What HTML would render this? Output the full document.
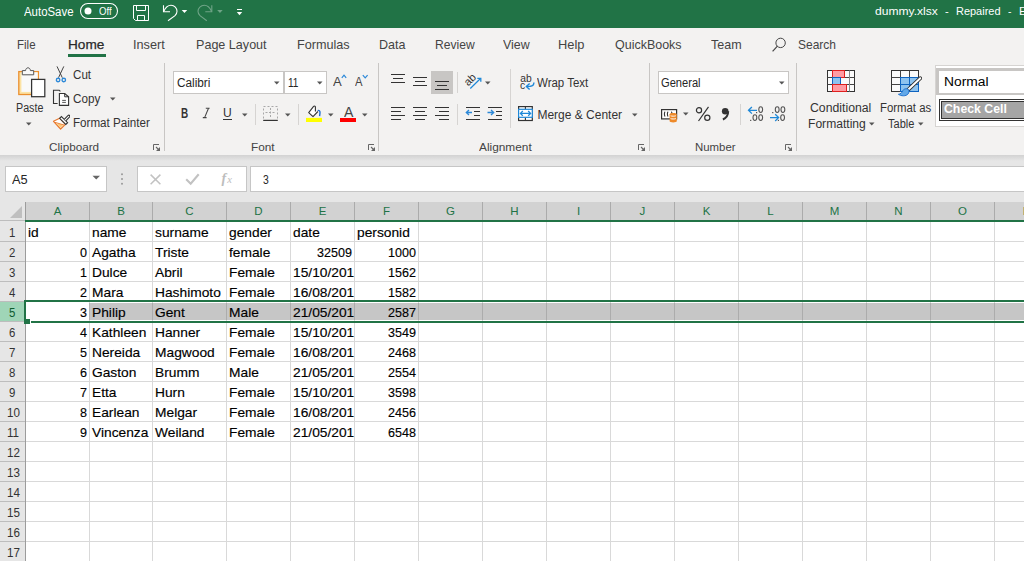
<!DOCTYPE html><html><head><meta charset="utf-8"><style>
html,body{margin:0;padding:0;width:1024px;height:561px;overflow:hidden;background:#fff}
body{position:relative;font-family:"Liberation Sans",sans-serif}
.r{position:absolute;display:block}
.t{position:absolute;white-space:nowrap;transform-origin:0 0}
</style></head><body>
<div class="r" style="left:0px;top:0px;width:1024px;height:28px;background:#217346;"></div>
<div class="t" style="left:23.50px;top:5.74px;font-size:12px;line-height:12px;color:#fff;transform:scaleX(0.9519);">AutoSave</div>
<svg class="r" style="left:79px;top:2px" width="41" height="19" viewBox="0 0 41 19"><rect x="1.5" y="1.5" width="37" height="15" rx="7.5" fill="none" stroke="#fff" stroke-width="1.05"/><circle cx="9" cy="9" r="3.5" fill="#fff"/></svg>
<div class="t" style="left:99.00px;top:6.11px;font-size:10.5px;line-height:10.5px;color:#fff;transform:scaleX(0.9137);">Off</div>
<svg class="r" style="left:132px;top:4px" width="18" height="18" viewBox="0 0 18 18"><path d="M1.5 1.5h15v15h-13l-2-2z" fill="none" stroke="#fff" stroke-width="1"/><path d="M4.5 1.5v5h9v-5" fill="none" stroke="#fff"/><path d="M5.5 16.5v-5h7v5" fill="none" stroke="#fff"/></svg>
<svg class="r" style="left:160px;top:4px" width="30" height="19" viewBox="0 0 30 19"><path d="M3.5 1.2v6.5h6.5" fill="none" stroke="#fff" stroke-width="1.1"/><path d="M3.8 7.3C5.5 3.5 8.5 1.3 11 1.3c3.5 0 6 2.6 6 6 0 1.8-.8 3.2-2 4.4L8 16.8" fill="none" stroke="#fff" stroke-width="1.1"/><path d="M21.7 6h5.5l-2.75 3z" fill="#fff"/></svg>
<svg class="r" style="left:196px;top:4px" width="30" height="19" viewBox="0 0 30 19"><g opacity="0.35"><path d="M15.8 1.2v6.5h-6.5" fill="none" stroke="#fff" stroke-width="1.1"/><path d="M15.5 7.3C13.8 3.5 10.8 1.3 8.3 1.3c-3.5 0-6.3 2.6-6.3 6 0 1.8.8 3.2 2 4.4L10.8 16.8" fill="none" stroke="#fff" stroke-width="1.1"/><path d="M21.2 6h5.5l-2.75 3z" fill="#fff"/></g></svg>
<svg class="r" style="left:235px;top:7px" width="9" height="10" viewBox="0 0 9 10"><rect x="2" y="2" width="5" height="1" fill="#fff"/><path d="M1.8 5h5.4l-2.7 3.2z" fill="#fff"/></svg>
<div class="t" style="left:875.40px;top:5.76px;font-size:11.5px;line-height:11.5px;color:#fff;transform:scaleX(1.0502);">dummy.xlsx</div>
<div class="t" style="left:944.50px;top:5.76px;font-size:11.5px;line-height:11.5px;color:#fff;transform:scaleX(0.9737);">-</div>
<div class="t" style="left:955.50px;top:5.76px;font-size:11.5px;line-height:11.5px;color:#fff;transform:scaleX(0.9529);">Repaired</div>
<div class="t" style="left:1008.00px;top:5.76px;font-size:11.5px;line-height:11.5px;color:#fff;transform:scaleX(0.8947);">-</div>
<div class="t" style="left:1019.00px;top:5.76px;font-size:11.5px;line-height:11.5px;color:#fff;">E</div>
<div class="r" style="left:0px;top:28px;width:1024px;height:127px;background:#f3f2f1;"></div>
<div class="t" style="left:17.00px;top:38.29px;font-size:13px;line-height:13px;color:#444;transform:scaleX(0.8852);">File</div>
<div class="t" style="left:68.40px;top:38.29px;font-size:13px;line-height:13px;color:#262626;transform:scaleX(1.0461);-webkit-text-stroke:0.25px #333;">Home</div>
<div class="t" style="left:133.20px;top:38.29px;font-size:13px;line-height:13px;color:#444;transform:scaleX(0.9754);">Insert</div>
<div class="t" style="left:196.00px;top:38.29px;font-size:13px;line-height:13px;color:#444;transform:scaleX(0.9671);">Page Layout</div>
<div class="t" style="left:297.00px;top:38.29px;font-size:13px;line-height:13px;color:#444;transform:scaleX(0.9723);">Formulas</div>
<div class="t" style="left:379.30px;top:38.29px;font-size:13px;line-height:13px;color:#444;transform:scaleX(0.9636);">Data</div>
<div class="t" style="left:435.30px;top:38.29px;font-size:13px;line-height:13px;color:#444;transform:scaleX(0.9297);">Review</div>
<div class="t" style="left:502.90px;top:38.29px;font-size:13px;line-height:13px;color:#444;transform:scaleX(0.9537);">View</div>
<div class="t" style="left:558.00px;top:38.29px;font-size:13px;line-height:13px;color:#444;transform:scaleX(0.9888);">Help</div>
<div class="t" style="left:615.00px;top:38.29px;font-size:13px;line-height:13px;color:#444;transform:scaleX(0.9597);">QuickBooks</div>
<div class="t" style="left:711.00px;top:38.29px;font-size:13px;line-height:13px;color:#444;transform:scaleX(0.9623);">Team</div>
<div class="t" style="left:798.00px;top:38.29px;font-size:13px;line-height:13px;color:#444;transform:scaleX(0.9223);">Search</div>
<div class="r" style="left:68px;top:54px;width:38px;height:3px;background:#217346;"></div>
<svg class="r" style="left:770px;top:35px" width="18" height="18" viewBox="0 0 18 18"><circle cx="10.6" cy="7.9" r="4.7" fill="none" stroke="#444" stroke-width="1"/><path d="M7.4 11.2L2.6 16.3" stroke="#444" stroke-width="1.2"/></svg>
<svg class="r" style="left:17px;top:65px" width="30" height="33" viewBox="0 0 30 33"><rect x="1.8" y="6.6" width="19.6" height="22.9" fill="#fce3a4" stroke="#ea8f2e" stroke-width="1.3"/><rect x="4.4" y="7.3" width="16.3" height="19.6" fill="#f9f9f9"/><path d="M5.3 9.8V5.6h3.3c0-1.6 1.1-2.8 2.4-2.8s2.4 1.2 2.4 2.8h3.3v4.2z" fill="#f9f9f9" stroke="#555" stroke-width="1"/><rect x="14.6" y="14.4" width="13.2" height="17.3" fill="#fff" stroke="#333" stroke-width="1.25"/></svg>
<div class="t" style="left:15.60px;top:102.14px;font-size:12px;line-height:12px;color:#333;transform:scaleX(0.8925);">Paste</div>
<svg class="r" style="left:26px;top:122px" width="6" height="4" viewBox="0 0 6 4"><path d="M0 0.5h5.5L2.75 3.5z" fill="#555"/></svg>
<svg class="r" style="left:54px;top:65px" width="14" height="18" viewBox="0 0 14 18"><path d="M3 1.4l5.3 11.3M9.8 1.4L4.5 12.7" stroke="#444" stroke-width="1" fill="none"/><circle cx="4.1" cy="15" r="1.75" fill="none" stroke="#2b88d8" stroke-width="1.3"/><circle cx="9.8" cy="15" r="1.75" fill="none" stroke="#2b88d8" stroke-width="1.3"/></svg>
<div class="t" style="left:72.70px;top:68.54px;font-size:12px;line-height:12px;color:#333;transform:scaleX(0.9679);">Cut</div>
<svg class="r" style="left:52px;top:89px" width="18" height="18" viewBox="0 0 18 18"><path d="M5.6 14.5H1.5V1.3h5.7l1.2 1" fill="none" stroke="#333" stroke-width="1.1"/><path d="M7.4 4.5h5.3l3.9 3.3v8.6H7.4z" fill="#fff" stroke="#333" stroke-width="1.1"/><path d="M12.7 4.5v3.3h3.9" fill="none" stroke="#333" stroke-width="1"/><path d="M10.2 11.4h3.7M10.2 13.4h3.7" stroke="#444" stroke-width="0.9"/></svg>
<div class="t" style="left:72.70px;top:92.84px;font-size:12px;line-height:12px;color:#333;transform:scaleX(0.9750);">Copy</div>
<svg class="r" style="left:110px;top:97px" width="6" height="4" viewBox="0 0 6 4"><path d="M0 0.5h5.5L2.75 3.5z" fill="#555"/></svg>
<svg class="r" style="left:52px;top:113px" width="18" height="17" viewBox="0 0 18 17"><path d="M1.5 8.3L7.6 5.2l5.8 6.2-4.8 4.6z" fill="#fff" stroke="#e8782d" stroke-width="1.2" stroke-linejoin="round"/><path d="M3.8 10.3l7.7 1.5-3 3z" fill="#fbc97a"/><path d="M2.5 9.2l9.5 2.8" stroke="#e8782d" stroke-width="0.9"/><path d="M7.6 5.3l1.8-1.8 6.2 6.2-1.8 1.8z" fill="#fff" stroke="#333" stroke-width="1.1"/><path d="M12.3 6.3l3.6-3.6c.6-.6 1.3-.6 1.7-.2.4.4.4 1.1-.2 1.7l-3.6 3.6" fill="#fff" stroke="#333" stroke-width="1.1"/></svg>
<div class="t" style="left:72.70px;top:116.64px;font-size:12px;line-height:12px;color:#333;transform:scaleX(0.9685);">Format Painter</div>
<div class="t" style="left:48.60px;top:141.76px;font-size:11.5px;line-height:11.5px;color:#444;transform:scaleX(1.0183);">Clipboard</div>
<svg class="r" style="left:152px;top:143px" width="10" height="10" viewBox="0 0 10 10"><path d="M1.5 7V1.5h5.5" fill="none" stroke="#666" stroke-width="1"/><path d="M8 4v4H4z" fill="#666"/><path d="M4 4l3.5 3.5" stroke="#666" stroke-width="1.1"/></svg>
<div class="r" style="left:164px;top:63px;width:1px;height:88px;background:#c8c6c4;"></div>
<div class="r" style="left:173px;top:71px;width:111px;height:23px;background:#fff;border:1px solid #c8c6c4;box-sizing:border-box;"></div>
<div class="r" style="left:284px;top:71px;width:43px;height:23px;background:#fff;border:1px solid #c8c6c4;box-sizing:border-box;"></div>
<div class="t" style="left:176.60px;top:76.64px;font-size:12px;line-height:12px;color:#262626;transform:scaleX(0.9824);">Calibri</div>
<svg class="r" style="left:274px;top:81px" width="6" height="4" viewBox="0 0 6 4"><path d="M0 0.5h5.5L2.75 3.5z" fill="#555"/></svg>
<div class="t" style="left:287.50px;top:76.64px;font-size:12px;line-height:12px;color:#262626;transform:scaleX(0.8400);">11</div>
<svg class="r" style="left:317px;top:81px" width="6" height="4" viewBox="0 0 6 4"><path d="M0 0.5h5.5L2.75 3.5z" fill="#555"/></svg>
<div class="t" style="left:333.00px;top:74.77px;font-size:13.5px;line-height:13.5px;color:#444;transform:scaleX(0.9667);">A</div>
<svg class="r" style="left:341px;top:74px" width="6" height="5" viewBox="0 0 6 5"><path d="M0.8 3.8L3 1.2l2.2 2.6" fill="none" stroke="#2b88d8" stroke-width="1.2"/></svg>
<div class="t" style="left:354.80px;top:76.04px;font-size:12px;line-height:12px;color:#444;transform:scaleX(0.9375);">A</div>
<svg class="r" style="left:362px;top:74px" width="7" height="5" viewBox="0 0 7 5"><path d="M0.8 1.2L3.2 3.8l2.4-2.6" fill="none" stroke="#2b88d8" stroke-width="1.2"/></svg>
<div class="t" style="left:180.80px;top:105.72px;font-size:14.5px;line-height:14.5px;color:#333;font-weight:bold;transform:scaleX(0.6857);">B</div>
<svg class="r" style="left:202px;top:107px" width="9" height="12" viewBox="0 0 9 12"><path d="M6.5 1.3L2.6 10.6" stroke="#444" stroke-width="1.05"/><path d="M3.8 1.3h3.8M0.8 10.6h3.8" stroke="#444" stroke-width="1.1"/></svg>
<div class="t" style="left:223.00px;top:107.02px;font-size:12.5px;line-height:12.5px;color:#333;transform:scaleX(0.9667);">U</div>
<div class="r" style="left:223px;top:119px;width:9px;height:1px;background:#333;"></div>
<svg class="r" style="left:242px;top:113px" width="6" height="4" viewBox="0 0 6 4"><path d="M0 0.5h5.5L2.75 3.5z" fill="#555"/></svg>
<div class="r" style="left:255px;top:104px;width:1px;height:21px;background:#d6d4d2;"></div>
<svg class="r" style="left:262px;top:105px" width="17" height="17" viewBox="0 0 17 17"><path d="M1.5 13.5V1.5h14v12" fill="none" stroke="#a8a8a8" stroke-width="1" stroke-dasharray="2 2"/><path d="M8.5 3v9M3.5 7.5h10" stroke="#a8a8a8" stroke-width="1" stroke-dasharray="2 1.5"/><path d="M1.2 15.4h14.6" stroke="#333" stroke-width="1.2"/></svg>
<svg class="r" style="left:285px;top:113px" width="6" height="4" viewBox="0 0 6 4"><path d="M0 0.5h5.5L2.75 3.5z" fill="#555"/></svg>
<div class="r" style="left:298px;top:104px;width:1px;height:21px;background:#d6d4d2;"></div>
<svg class="r" style="left:306px;top:105px" width="18" height="17" viewBox="0 0 18 17"><path d="M9.4 6.4V2.1c0-.7-.4-1.1-.9-1.1s-.8.2-1.1.7L2.7 7.6 7 11.7l4.9-5.2" fill="#fff" stroke="#333" stroke-width="1.1" stroke-linejoin="round"/><path d="M11.7 5.6c1.3-.6 2.4.4 2.3 2l-.4 3.5" fill="none" stroke="#1e6fd0" stroke-width="1.4"/><rect x="0" y="12.9" width="16" height="4.1" fill="#ffff00"/></svg>
<svg class="r" style="left:328px;top:113px" width="6" height="4" viewBox="0 0 6 4"><path d="M0 0.5h5.5L2.75 3.5z" fill="#555"/></svg>
<div class="t" style="left:343.50px;top:104.30px;font-size:15px;line-height:15px;color:#444;transform:scaleX(0.9400);">A</div>
<div class="r" style="left:340px;top:118px;width:16px;height:4px;background:#f00;"></div>
<svg class="r" style="left:362px;top:113px" width="6" height="4" viewBox="0 0 6 4"><path d="M0 0.5h5.5L2.75 3.5z" fill="#555"/></svg>
<div class="t" style="left:251.00px;top:141.76px;font-size:11.5px;line-height:11.5px;color:#444;transform:scaleX(1.0261);">Font</div>
<svg class="r" style="left:367px;top:143px" width="10" height="10" viewBox="0 0 10 10"><path d="M1.5 7V1.5h5.5" fill="none" stroke="#666" stroke-width="1"/><path d="M8 4v4H4z" fill="#666"/><path d="M4 4l3.5 3.5" stroke="#666" stroke-width="1.1"/></svg>
<div class="r" style="left:378px;top:63px;width:1px;height:88px;background:#c8c6c4;"></div>
<div class="r" style="left:391px;top:74px;width:14px;height:1.3px;background:#333;"></div>
<div class="r" style="left:393px;top:78px;width:10px;height:1.3px;background:#333;"></div>
<div class="r" style="left:391px;top:82px;width:14px;height:1.3px;background:#333;"></div>
<div class="r" style="left:413px;top:77px;width:14px;height:1.3px;background:#333;"></div>
<div class="r" style="left:415px;top:81px;width:10px;height:1.3px;background:#333;"></div>
<div class="r" style="left:413px;top:85px;width:14px;height:1.3px;background:#333;"></div>
<div class="r" style="left:431px;top:71px;width:22px;height:23px;background:#c8c6c4;"></div>
<div class="r" style="left:435px;top:81px;width:14px;height:1.3px;background:#333;"></div>
<div class="r" style="left:437px;top:85px;width:10px;height:1.3px;background:#333;"></div>
<div class="r" style="left:435px;top:89px;width:14px;height:1.3px;background:#333;"></div>
<div class="r" style="left:457px;top:72px;width:1px;height:21px;background:#d6d4d2;"></div>
<svg class="r" style="left:464px;top:72px" width="20" height="19" viewBox="0 0 20 19"><text x="0" y="0" font-family="Liberation Sans" font-size="11" fill="#333" transform="translate(4.2,14.6) rotate(-45)">ab</text><path d="M6.3 16.5L16.5 6.5" stroke="#1e88d8" stroke-width="1.2"/><path d="M13.3 6.3h3.5v3.4" fill="none" stroke="#1e88d8" stroke-width="1.3"/></svg>
<svg class="r" style="left:485px;top:81px" width="6" height="4" viewBox="0 0 6 4"><path d="M0 0.5h5.5L2.75 3.5z" fill="#555"/></svg>
<div class="r" style="left:391px;top:107px;width:14px;height:1.3px;background:#333;"></div>
<div class="r" style="left:391px;top:111px;width:10px;height:1.3px;background:#333;"></div>
<div class="r" style="left:391px;top:115px;width:14px;height:1.3px;background:#333;"></div>
<div class="r" style="left:391px;top:119px;width:10px;height:1.3px;background:#333;"></div>
<div class="r" style="left:413px;top:107px;width:14px;height:1.3px;background:#333;"></div>
<div class="r" style="left:415.2px;top:111px;width:9.5px;height:1.3px;background:#333;"></div>
<div class="r" style="left:413px;top:115px;width:14px;height:1.3px;background:#333;"></div>
<div class="r" style="left:415.2px;top:119px;width:9.5px;height:1.3px;background:#333;"></div>
<div class="r" style="left:435px;top:107px;width:14px;height:1.3px;background:#333;"></div>
<div class="r" style="left:439px;top:111px;width:10px;height:1.3px;background:#333;"></div>
<div class="r" style="left:435px;top:115px;width:14px;height:1.3px;background:#333;"></div>
<div class="r" style="left:439px;top:119px;width:10px;height:1.3px;background:#333;"></div>
<div class="r" style="left:457px;top:104px;width:1px;height:21px;background:#d6d4d2;"></div>
<div class="r" style="left:466px;top:107px;width:14px;height:1.3px;background:#333;"></div>
<div class="r" style="left:474px;top:111px;width:6px;height:1.3px;background:#333;"></div>
<div class="r" style="left:474px;top:115px;width:6px;height:1.3px;background:#333;"></div>
<div class="r" style="left:466px;top:119px;width:14px;height:1.3px;background:#333;"></div>
<svg class="r" style="left:465px;top:109px" width="8" height="7" viewBox="0 0 8 7"><path d="M7 3.5H1.5M4 1L1.3 3.5 4 6" fill="none" stroke="#2b88d8" stroke-width="1.3"/></svg>
<div class="r" style="left:488px;top:107px;width:14px;height:1.3px;background:#333;"></div>
<div class="r" style="left:496px;top:111px;width:6px;height:1.3px;background:#333;"></div>
<div class="r" style="left:496px;top:115px;width:6px;height:1.3px;background:#333;"></div>
<div class="r" style="left:488px;top:119px;width:14px;height:1.3px;background:#333;"></div>
<svg class="r" style="left:487px;top:109px" width="8" height="7" viewBox="0 0 8 7"><path d="M0.5 3.5H6.5M4 1l2.7 2.5L4 6" fill="none" stroke="#2b88d8" stroke-width="1.3"/></svg>
<div class="r" style="left:510px;top:69px;width:1px;height:59px;background:#d6d4d2;"></div>
<svg class="r" style="left:519px;top:74px" width="17" height="17" viewBox="0 0 17 17"><text x="1.2" y="7.6" font-family="Liberation Sans" font-size="10.3" fill="#333">ab</text><text x="1" y="14.8" font-family="Liberation Sans" font-size="10.3" fill="#333">c</text><path d="M14.9 8.4c0 2-1.5 3.6-3.6 3.9L7.6 12.4" fill="none" stroke="#1e88d8" stroke-width="1.4"/><path d="M10.6 9.4L7.4 12.4l3.2 3.1" fill="none" stroke="#1e88d8" stroke-width="1.4"/></svg>
<div class="t" style="left:537.40px;top:76.84px;font-size:12px;line-height:12px;color:#333;transform:scaleX(0.9571);">Wrap Text</div>
<svg class="r" style="left:517px;top:105px" width="17" height="17" viewBox="0 0 17 17"><rect x="1.6" y="1.6" width="13.7" height="13.9" fill="#fff" stroke="#333" stroke-width="1.2"/><path d="M8.4 1.6v2.7M8.4 12.3v3.2" stroke="#333" stroke-width="1.1"/><rect x="1.6" y="4.3" width="13.7" height="8" fill="#fff" stroke="#1e88d8" stroke-width="1.2"/><path d="M3.6 8.4h9.8M5.8 6L3.4 8.4l2.4 2.4M11.2 6l2.4 2.4-2.4 2.4" fill="none" stroke="#1e88d8" stroke-width="1.3"/></svg>
<div class="t" style="left:537.40px;top:108.64px;font-size:12px;line-height:12px;color:#333;">Merge &amp; Center</div>
<svg class="r" style="left:632px;top:113px" width="6" height="4" viewBox="0 0 6 4"><path d="M0 0.5h5.5L2.75 3.5z" fill="#555"/></svg>
<div class="t" style="left:478.90px;top:141.76px;font-size:11.5px;line-height:11.5px;color:#444;transform:scaleX(1.0313);">Alignment</div>
<svg class="r" style="left:637px;top:143px" width="10" height="10" viewBox="0 0 10 10"><path d="M1.5 7V1.5h5.5" fill="none" stroke="#666" stroke-width="1"/><path d="M8 4v4H4z" fill="#666"/><path d="M4 4l3.5 3.5" stroke="#666" stroke-width="1.1"/></svg>
<div class="r" style="left:649px;top:63px;width:1px;height:88px;background:#c8c6c4;"></div>
<div class="r" style="left:658px;top:71px;width:131px;height:23px;background:#fff;border:1px solid #c8c6c4;box-sizing:border-box;"></div>
<div class="t" style="left:661.40px;top:76.84px;font-size:12px;line-height:12px;color:#262626;transform:scaleX(0.9274);">General</div>
<svg class="r" style="left:779px;top:81px" width="6" height="4" viewBox="0 0 6 4"><path d="M0 0.5h5.5L2.75 3.5z" fill="#555"/></svg>
<svg class="r" style="left:660px;top:108px" width="20" height="15" viewBox="0 0 20 15"><rect x="1.6" y="1.6" width="15" height="9.3" fill="#fff" stroke="#333" stroke-width="1.2"/><path d="M5.2 3.8c-1.1.5-1.1 4 0 4.6M8.2 3.8c-1.1.5-1.1 4 0 4.6M11.2 3.8c1.1.5 1.1 4 0 4.6" fill="none" stroke="#333" stroke-width="1.1"/><path d="M9.6 6.3c0-1 1.6-1.4 3.6-1.4s3.6.4 3.6 1.4v6.8c0 1-1.6 1.4-3.6 1.4s-3.6-.4-3.6-1.4z" fill="#ee8a2a"/><path d="M10.6 7.8c.8.5 4.4.5 5.2 0M10.6 10.6c.8.5 4.4.5 5.2 0" fill="none" stroke="#fff" stroke-width="1"/></svg>
<svg class="r" style="left:683px;top:112px" width="6" height="4" viewBox="0 0 6 4"><path d="M0 0.5h5.5L2.75 3.5z" fill="#555"/></svg>
<svg class="r" style="left:694px;top:105px" width="18" height="18" viewBox="0 0 18 18"><circle cx="5" cy="5.3" r="2.6" fill="none" stroke="#333" stroke-width="1.2"/><circle cx="13.3" cy="12.8" r="2.6" fill="none" stroke="#333" stroke-width="1.2"/><path d="M14.5 1.8L4.5 16" stroke="#333" stroke-width="1.2"/></svg>
<svg class="r" style="left:720px;top:107px" width="11" height="14" viewBox="0 0 11 14"><circle cx="5.2" cy="4.3" r="3.3" fill="#333"/><path d="M8.2 4.3c0 4.2-2.2 6.8-5.3 8.2" fill="none" stroke="#333" stroke-width="2"/></svg>
<div class="r" style="left:740px;top:104px;width:1px;height:21px;background:#d6d4d2;"></div>
<svg class="r" style="left:747px;top:105px" width="18" height="18" viewBox="0 0 18 18"><path d="M1.3 5.3h8.7M4.9 2L1.5 5.3 4.9 8.6" fill="none" stroke="#1e88d8" stroke-width="1.3"/><rect x="9.0" y="7.0" width="1.2" height="1.2" fill="#555"/><ellipse cx="13.7" cy="4.6" rx="1.9" ry="2.9" fill="none" stroke="#555" stroke-width="1.1"/><rect x="3.1" y="14.8" width="1.2" height="1.2" fill="#555"/><ellipse cx="7.9" cy="12.6" rx="1.9" ry="2.9" fill="none" stroke="#555" stroke-width="1.1"/><ellipse cx="13.7" cy="12.6" rx="1.9" ry="2.9" fill="none" stroke="#555" stroke-width="1.1"/></svg>
<svg class="r" style="left:769px;top:105px" width="18" height="18" viewBox="0 0 18 18"><rect x="3.15" y="7.0" width="1.2" height="1.2" fill="#555"/><ellipse cx="8.2" cy="4.6" rx="1.9" ry="2.9" fill="none" stroke="#555" stroke-width="1.1"/><ellipse cx="13.9" cy="4.6" rx="1.9" ry="2.9" fill="none" stroke="#555" stroke-width="1.1"/><path d="M1 12.6h8.6M6.2 9.2l3.4 3.4-3.4 3.4" fill="none" stroke="#1e88d8" stroke-width="1.3"/><rect x="8.8" y="14.8" width="1.2" height="1.2" fill="#555"/><ellipse cx="13.6" cy="12.6" rx="1.9" ry="2.9" fill="none" stroke="#555" stroke-width="1.1"/></svg>
<div class="t" style="left:694.50px;top:141.76px;font-size:11.5px;line-height:11.5px;color:#444;transform:scaleX(0.9902);">Number</div>
<svg class="r" style="left:784px;top:143px" width="10" height="10" viewBox="0 0 10 10"><path d="M1.5 7V1.5h5.5" fill="none" stroke="#666" stroke-width="1"/><path d="M8 4v4H4z" fill="#666"/><path d="M4 4l3.5 3.5" stroke="#666" stroke-width="1.1"/></svg>
<div class="r" style="left:796px;top:63px;width:1px;height:88px;background:#c8c6c4;"></div>
<svg class="r" style="left:826px;top:69px" width="31" height="24" viewBox="0 0 31 24"><rect x="1.5" y="1.5" width="27" height="21" fill="#fafafa" stroke="#333" stroke-width="1"/><path d="M1.5 8.5h27M1.5 15.5h27" stroke="#444" stroke-width="1"/><path d="M23.5 1.5v21" stroke="#888" stroke-width="1"/><rect x="6.5" y="1.5" width="12" height="7" fill="#ff9ca3" stroke="#e0201f" stroke-width="1"/><rect x="6.5" y="8.5" width="8" height="7" fill="#8ec3ef" stroke="#0f64c0" stroke-width="1"/><rect x="6.5" y="15.5" width="14" height="7" fill="#ff9ca3" stroke="#e0201f" stroke-width="1"/></svg>
<div class="t" style="left:810.40px;top:102.14px;font-size:12px;line-height:12px;color:#333;transform:scaleX(1.0217);">Conditional</div>
<div class="t" style="left:807.50px;top:118.04px;font-size:12px;line-height:12px;color:#333;transform:scaleX(1.0070);">Formatting</div>
<svg class="r" style="left:869px;top:122px" width="6" height="4" viewBox="0 0 6 4"><path d="M0 0.5h5.5L2.75 3.5z" fill="#555"/></svg>
<svg class="r" style="left:890px;top:69px" width="32" height="29" viewBox="0 0 32 29"><rect x="1.5" y="1.5" width="27" height="21" fill="#fafafa" stroke="#333" stroke-width="1"/><path d="M1.5 8.5h27M1.5 15.5h27M10.5 1.5v21M19.5 1.5v21" stroke="#444" stroke-width="1"/><rect x="10.5" y="8.5" width="18" height="14" fill="#8ec3ef" stroke="#0f64c0" stroke-width="1"/><path d="M10.5 15.5h18M19.5 8.5v14" stroke="#0f64c0" stroke-width="1"/><path d="M30.3 9.2L18.6 20.3" stroke="#333" stroke-width="3.8" stroke-linecap="round"/><path d="M30.3 9.2L18.6 20.3" stroke="#fff" stroke-width="1.9" stroke-linecap="round"/><path d="M18.6 20.6c-2-1.6-5-.9-6 1.4-.8 1.8-2 3-4.2 3.3 2.6 1.9 7.6 2.2 9.6-.3 1-1.2 1.3-3 .6-4.4z" fill="#62a8e8" stroke="#1a6ccc" stroke-width="0.9"/></svg>
<div class="t" style="left:879.50px;top:102.14px;font-size:12px;line-height:12px;color:#333;transform:scaleX(0.9481);">Format as</div>
<div class="t" style="left:888.40px;top:118.04px;font-size:12px;line-height:12px;color:#333;transform:scaleX(0.9199);">Table</div>
<svg class="r" style="left:918px;top:122px" width="6" height="4" viewBox="0 0 6 4"><path d="M0 0.5h5.5L2.75 3.5z" fill="#555"/></svg>
<div class="r" style="left:935px;top:65px;width:89px;height:62px;background:#fff;border:1px solid #d6d4d2;border-right:none;box-sizing:border-box;"></div>
<div class="r" style="left:936px;top:68px;width:88px;height:27px;background:#c8c6c4;"></div>
<div class="r" style="left:939px;top:71px;width:85px;height:22px;background:#fff;"></div>
<div class="t" style="left:943.50px;top:75.72px;font-size:12.5px;line-height:12.5px;color:#000;transform:scaleX(1.1042);">Normal</div>
<div class="r" style="left:939px;top:99px;width:85px;height:22px;background:#333;"></div>
<div class="r" style="left:940px;top:100px;width:84px;height:20px;background:#fff;"></div>
<div class="r" style="left:941px;top:101px;width:83px;height:18px;background:#333;"></div>
<div class="r" style="left:942px;top:102px;width:82px;height:16px;background:#a5a5a5;"></div>
<div class="t" style="left:943.50px;top:102.37px;font-size:13.5px;line-height:13.5px;color:#fff;font-weight:bold;transform:scaleX(0.9101);">Check Cell</div>
<div class="r" style="left:0px;top:155px;width:1024px;height:47px;background:#e6e6e6;"></div>
<div class="r" style="left:0px;top:155px;width:1024px;height:6px;background:linear-gradient(#d2d2d2,#e6e6e6);"></div>
<div class="r" style="left:5px;top:166px;width:102px;height:26px;background:#fff;border:1px solid #c6c6c6;box-sizing:border-box;"></div>
<div class="t" style="left:12.10px;top:174.14px;font-size:12px;line-height:12px;color:#262626;transform:scaleX(1.0680);">A5</div>
<svg class="r" style="left:92px;top:175px" width="9" height="6" viewBox="0 0 9 6"><path d="M0.5 0.8h7.5L4.25 4.6z" fill="#666"/></svg>
<svg class="r" style="left:120px;top:172px" width="4" height="14" viewBox="0 0 4 14"><circle cx="2" cy="2.2" r="1" fill="#999"/><circle cx="2" cy="7" r="1" fill="#999"/><circle cx="2" cy="11.8" r="1" fill="#999"/></svg>
<div class="r" style="left:137px;top:166px;width:110px;height:26px;background:#fff;border:1px solid #c6c6c6;box-sizing:border-box;"></div>
<svg class="r" style="left:149px;top:173px" width="14" height="13" viewBox="0 0 14 13"><path d="M1.6 1.6l9.8 9.6M11.4 1.6L1.6 11.2" stroke="#c2c2c2" stroke-width="1.5"/></svg>
<svg class="r" style="left:184px;top:172px" width="16" height="14" viewBox="0 0 16 14"><path d="M2.2 7.2l4.5 4.6 8-9.5" fill="none" stroke="#c2c2c2" stroke-width="2.1"/></svg>
<svg class="r" style="left:220px;top:170px" width="16" height="16" viewBox="0 0 16 16"><text x="1.5" y="12.5" font-family="Liberation Serif" font-style="italic" font-weight="bold" font-size="14" fill="#bdbdbd">f</text><text x="7.2" y="12.5" font-family="Liberation Serif" font-style="italic" font-size="10.5" fill="#bdbdbd">x</text></svg>
<div class="r" style="left:250px;top:166px;width:774px;height:26px;background:#fff;border:1px solid #c6c6c6;border-right:none;box-sizing:border-box;"></div>
<div class="t" style="left:262.60px;top:174.04px;font-size:12px;line-height:12px;color:#262626;transform:scaleX(0.8657);">3</div>
<div class="r" style="left:0px;top:202px;width:1024px;height:359px;background:#fff;"></div>
<div class="r" style="left:0px;top:202px;width:25px;height:19px;background:#e6e6e6;"></div>
<div class="r" style="left:25px;top:202px;width:999px;height:18px;background:#d2d2d2;"></div>
<svg class="r" style="left:8px;top:205px" width="15" height="14" viewBox="0 0 15 14"><path d="M14 1v12H2z" fill="#bfbfbf"/></svg>
<div class="r" style="left:0px;top:221px;width:25px;height:340px;background:#e6e6e6;"></div>
<div class="r" style="left:26px;top:241px;width:998px;height:1px;background:#d9d9d9;"></div>
<div class="r" style="left:0px;top:241px;width:25px;height:1px;background:#bdbdbd;"></div>
<div class="r" style="left:26px;top:261px;width:998px;height:1px;background:#d9d9d9;"></div>
<div class="r" style="left:0px;top:261px;width:25px;height:1px;background:#bdbdbd;"></div>
<div class="r" style="left:26px;top:281px;width:998px;height:1px;background:#d9d9d9;"></div>
<div class="r" style="left:0px;top:281px;width:25px;height:1px;background:#bdbdbd;"></div>
<div class="r" style="left:26px;top:301px;width:998px;height:1px;background:#d9d9d9;"></div>
<div class="r" style="left:0px;top:301px;width:25px;height:1px;background:#bdbdbd;"></div>
<div class="r" style="left:26px;top:321px;width:998px;height:1px;background:#d9d9d9;"></div>
<div class="r" style="left:0px;top:321px;width:25px;height:1px;background:#bdbdbd;"></div>
<div class="r" style="left:26px;top:341px;width:998px;height:1px;background:#d9d9d9;"></div>
<div class="r" style="left:0px;top:341px;width:25px;height:1px;background:#bdbdbd;"></div>
<div class="r" style="left:26px;top:361px;width:998px;height:1px;background:#d9d9d9;"></div>
<div class="r" style="left:0px;top:361px;width:25px;height:1px;background:#bdbdbd;"></div>
<div class="r" style="left:26px;top:381px;width:998px;height:1px;background:#d9d9d9;"></div>
<div class="r" style="left:0px;top:381px;width:25px;height:1px;background:#bdbdbd;"></div>
<div class="r" style="left:26px;top:401px;width:998px;height:1px;background:#d9d9d9;"></div>
<div class="r" style="left:0px;top:401px;width:25px;height:1px;background:#bdbdbd;"></div>
<div class="r" style="left:26px;top:421px;width:998px;height:1px;background:#d9d9d9;"></div>
<div class="r" style="left:0px;top:421px;width:25px;height:1px;background:#bdbdbd;"></div>
<div class="r" style="left:26px;top:441px;width:998px;height:1px;background:#d9d9d9;"></div>
<div class="r" style="left:0px;top:441px;width:25px;height:1px;background:#bdbdbd;"></div>
<div class="r" style="left:26px;top:461px;width:998px;height:1px;background:#d9d9d9;"></div>
<div class="r" style="left:0px;top:461px;width:25px;height:1px;background:#bdbdbd;"></div>
<div class="r" style="left:26px;top:481px;width:998px;height:1px;background:#d9d9d9;"></div>
<div class="r" style="left:0px;top:481px;width:25px;height:1px;background:#bdbdbd;"></div>
<div class="r" style="left:26px;top:501px;width:998px;height:1px;background:#d9d9d9;"></div>
<div class="r" style="left:0px;top:501px;width:25px;height:1px;background:#bdbdbd;"></div>
<div class="r" style="left:26px;top:521px;width:998px;height:1px;background:#d9d9d9;"></div>
<div class="r" style="left:0px;top:521px;width:25px;height:1px;background:#bdbdbd;"></div>
<div class="r" style="left:26px;top:541px;width:998px;height:1px;background:#d9d9d9;"></div>
<div class="r" style="left:0px;top:541px;width:25px;height:1px;background:#bdbdbd;"></div>
<div class="r" style="left:26px;top:561px;width:998px;height:1px;background:#d9d9d9;"></div>
<div class="r" style="left:0px;top:561px;width:25px;height:1px;background:#bdbdbd;"></div>
<div class="r" style="left:89px;top:222px;width:1px;height:339px;background:#d9d9d9;"></div>
<div class="r" style="left:89px;top:202px;width:1px;height:18px;background:#ababab;"></div>
<div class="r" style="left:152px;top:222px;width:1px;height:339px;background:#d9d9d9;"></div>
<div class="r" style="left:152px;top:202px;width:1px;height:18px;background:#ababab;"></div>
<div class="r" style="left:226px;top:222px;width:1px;height:339px;background:#d9d9d9;"></div>
<div class="r" style="left:226px;top:202px;width:1px;height:18px;background:#ababab;"></div>
<div class="r" style="left:290px;top:222px;width:1px;height:339px;background:#d9d9d9;"></div>
<div class="r" style="left:290px;top:202px;width:1px;height:18px;background:#ababab;"></div>
<div class="r" style="left:354px;top:222px;width:1px;height:339px;background:#d9d9d9;"></div>
<div class="r" style="left:354px;top:202px;width:1px;height:18px;background:#ababab;"></div>
<div class="r" style="left:418px;top:222px;width:1px;height:339px;background:#d9d9d9;"></div>
<div class="r" style="left:418px;top:202px;width:1px;height:18px;background:#ababab;"></div>
<div class="r" style="left:482px;top:222px;width:1px;height:339px;background:#d9d9d9;"></div>
<div class="r" style="left:482px;top:202px;width:1px;height:18px;background:#ababab;"></div>
<div class="r" style="left:546px;top:222px;width:1px;height:339px;background:#d9d9d9;"></div>
<div class="r" style="left:546px;top:202px;width:1px;height:18px;background:#ababab;"></div>
<div class="r" style="left:610px;top:222px;width:1px;height:339px;background:#d9d9d9;"></div>
<div class="r" style="left:610px;top:202px;width:1px;height:18px;background:#ababab;"></div>
<div class="r" style="left:674px;top:222px;width:1px;height:339px;background:#d9d9d9;"></div>
<div class="r" style="left:674px;top:202px;width:1px;height:18px;background:#ababab;"></div>
<div class="r" style="left:738px;top:222px;width:1px;height:339px;background:#d9d9d9;"></div>
<div class="r" style="left:738px;top:202px;width:1px;height:18px;background:#ababab;"></div>
<div class="r" style="left:802px;top:222px;width:1px;height:339px;background:#d9d9d9;"></div>
<div class="r" style="left:802px;top:202px;width:1px;height:18px;background:#ababab;"></div>
<div class="r" style="left:866px;top:222px;width:1px;height:339px;background:#d9d9d9;"></div>
<div class="r" style="left:866px;top:202px;width:1px;height:18px;background:#ababab;"></div>
<div class="r" style="left:930px;top:222px;width:1px;height:339px;background:#d9d9d9;"></div>
<div class="r" style="left:930px;top:202px;width:1px;height:18px;background:#ababab;"></div>
<div class="r" style="left:994px;top:222px;width:1px;height:339px;background:#d9d9d9;"></div>
<div class="r" style="left:994px;top:202px;width:1px;height:18px;background:#ababab;"></div>
<div class="r" style="left:25px;top:202px;width:1px;height:359px;background:#9c9c9c;"></div>
<div class="r" style="left:0px;top:220px;width:25px;height:1px;background:#bdbdbd;"></div>
<div class="r" style="left:0px;top:302px;width:25px;height:19px;background:#9fd5b7;"></div>
<div class="r" style="left:89px;top:303px;width:935px;height:17px;background:#c6c6c6;"></div>
<div class="r" style="left:152px;top:303px;width:1px;height:17px;background:#acacac;"></div>
<div class="r" style="left:226px;top:303px;width:1px;height:17px;background:#acacac;"></div>
<div class="r" style="left:290px;top:303px;width:1px;height:17px;background:#acacac;"></div>
<div class="r" style="left:354px;top:303px;width:1px;height:17px;background:#acacac;"></div>
<div class="r" style="left:418px;top:303px;width:1px;height:17px;background:#acacac;"></div>
<div class="r" style="left:482px;top:303px;width:1px;height:17px;background:#acacac;"></div>
<div class="r" style="left:546px;top:303px;width:1px;height:17px;background:#acacac;"></div>
<div class="r" style="left:610px;top:303px;width:1px;height:17px;background:#acacac;"></div>
<div class="r" style="left:674px;top:303px;width:1px;height:17px;background:#acacac;"></div>
<div class="r" style="left:738px;top:303px;width:1px;height:17px;background:#acacac;"></div>
<div class="r" style="left:802px;top:303px;width:1px;height:17px;background:#acacac;"></div>
<div class="r" style="left:866px;top:303px;width:1px;height:17px;background:#acacac;"></div>
<div class="r" style="left:930px;top:303px;width:1px;height:17px;background:#acacac;"></div>
<div class="r" style="left:994px;top:303px;width:1px;height:17px;background:#acacac;"></div>
<div class="r" style="left:89px;top:303px;width:1px;height:17px;background:#b4b4b4;"></div>
<div class="r" style="left:25px;top:220px;width:999px;height:2px;background:#217346;"></div>
<div class="r" style="left:24px;top:300px;width:1000px;height:2px;background:#217346;"></div>
<div class="r" style="left:24px;top:321px;width:1000px;height:2px;background:#217346;"></div>
<div class="r" style="left:24px;top:300px;width:2px;height:23px;background:#217346;"></div>
<div class="r" style="left:30px;top:321px;width:1px;height:2px;background:#fff;"></div>
<div class="r" style="left:24px;top:319px;width:6px;height:5px;background:#217346;"></div>
<div class="t" style="left:53.65px;top:205.86px;font-size:11.5px;line-height:11.5px;color:#217346;">A</div>
<div class="t" style="left:117.15px;top:205.86px;font-size:11.5px;line-height:11.5px;color:#217346;">B</div>
<div class="t" style="left:185.35px;top:205.86px;font-size:11.5px;line-height:11.5px;color:#217346;">C</div>
<div class="t" style="left:254.35px;top:205.86px;font-size:11.5px;line-height:11.5px;color:#217346;">D</div>
<div class="t" style="left:318.65px;top:205.86px;font-size:11.5px;line-height:11.5px;color:#217346;">E</div>
<div class="t" style="left:383.00px;top:205.86px;font-size:11.5px;line-height:11.5px;color:#217346;">F</div>
<div class="t" style="left:446.05px;top:205.86px;font-size:11.5px;line-height:11.5px;color:#217346;">G</div>
<div class="t" style="left:510.35px;top:205.86px;font-size:11.5px;line-height:11.5px;color:#217346;">H</div>
<div class="t" style="left:576.90px;top:205.86px;font-size:11.5px;line-height:11.5px;color:#217346;">I</div>
<div class="t" style="left:639.60px;top:205.86px;font-size:11.5px;line-height:11.5px;color:#217346;">J</div>
<div class="t" style="left:702.65px;top:205.86px;font-size:11.5px;line-height:11.5px;color:#217346;">K</div>
<div class="t" style="left:767.30px;top:205.86px;font-size:11.5px;line-height:11.5px;color:#217346;">L</div>
<div class="t" style="left:829.70px;top:205.86px;font-size:11.5px;line-height:11.5px;color:#217346;">M</div>
<div class="t" style="left:894.35px;top:205.86px;font-size:11.5px;line-height:11.5px;color:#217346;">N</div>
<div class="t" style="left:958.05px;top:205.86px;font-size:11.5px;line-height:11.5px;color:#217346;">O</div>
<div class="t" style="left:1022.65px;top:205.86px;font-size:11.5px;line-height:11.5px;color:#217346;">P</div>
<div class="t" style="left:9.32px;top:226.64px;font-size:12px;line-height:12px;color:#333;transform:scaleX(0.9500);">1</div>
<div class="t" style="left:9.32px;top:246.64px;font-size:12px;line-height:12px;color:#333;transform:scaleX(0.9500);">2</div>
<div class="t" style="left:9.32px;top:266.64px;font-size:12px;line-height:12px;color:#333;transform:scaleX(0.9500);">3</div>
<div class="t" style="left:9.32px;top:286.64px;font-size:12px;line-height:12px;color:#333;transform:scaleX(0.9500);">4</div>
<div class="t" style="left:9.32px;top:306.64px;font-size:12px;line-height:12px;color:#0e5c2f;transform:scaleX(0.9500);">5</div>
<div class="t" style="left:9.32px;top:326.64px;font-size:12px;line-height:12px;color:#333;transform:scaleX(0.9500);">6</div>
<div class="t" style="left:9.32px;top:346.64px;font-size:12px;line-height:12px;color:#333;transform:scaleX(0.9500);">7</div>
<div class="t" style="left:9.32px;top:366.64px;font-size:12px;line-height:12px;color:#333;transform:scaleX(0.9500);">8</div>
<div class="t" style="left:9.32px;top:386.64px;font-size:12px;line-height:12px;color:#333;transform:scaleX(0.9500);">9</div>
<div class="t" style="left:6.75px;top:406.64px;font-size:12px;line-height:12px;color:#333;transform:scaleX(0.9700);">10</div>
<div class="t" style="left:7.14px;top:426.64px;font-size:12px;line-height:12px;color:#333;transform:scaleX(0.9700);">11</div>
<div class="t" style="left:6.75px;top:446.64px;font-size:12px;line-height:12px;color:#333;transform:scaleX(0.9700);">12</div>
<div class="t" style="left:6.75px;top:466.64px;font-size:12px;line-height:12px;color:#333;transform:scaleX(0.9700);">13</div>
<div class="t" style="left:6.75px;top:486.64px;font-size:12px;line-height:12px;color:#333;transform:scaleX(0.9700);">14</div>
<div class="t" style="left:6.75px;top:506.64px;font-size:12px;line-height:12px;color:#333;transform:scaleX(0.9700);">15</div>
<div class="t" style="left:6.75px;top:526.64px;font-size:12px;line-height:12px;color:#333;transform:scaleX(0.9700);">16</div>
<div class="t" style="left:6.75px;top:546.64px;font-size:12px;line-height:12px;color:#333;transform:scaleX(0.9700);">17</div>
<div class="t" style="left:28.30px;top:226.07px;font-size:13.5px;line-height:13.5px;color:#000;transform:scaleX(1.0200);-webkit-text-stroke:0.15px #000;">id</div>
<div class="t" style="left:92.30px;top:226.07px;font-size:13.5px;line-height:13.5px;color:#000;transform:scaleX(1.0200);-webkit-text-stroke:0.15px #000;">name</div>
<div class="t" style="left:155.30px;top:226.07px;font-size:13.5px;line-height:13.5px;color:#000;transform:scaleX(1.0200);-webkit-text-stroke:0.15px #000;">surname</div>
<div class="t" style="left:229.30px;top:226.07px;font-size:13.5px;line-height:13.5px;color:#000;transform:scaleX(1.0200);-webkit-text-stroke:0.15px #000;">gender</div>
<div class="t" style="left:293.30px;top:226.07px;font-size:13.5px;line-height:13.5px;color:#000;transform:scaleX(1.0200);-webkit-text-stroke:0.15px #000;">date</div>
<div class="t" style="left:357.30px;top:226.07px;font-size:13.5px;line-height:13.5px;color:#000;transform:scaleX(1.0200);-webkit-text-stroke:0.15px #000;">personid</div>
<div class="t" style="left:79.73px;top:246.07px;font-size:13.5px;line-height:13.5px;color:#000;transform:scaleX(0.9300);-webkit-text-stroke:0.15px #000;">0</div>
<div class="t" style="left:92.30px;top:246.07px;font-size:13.5px;line-height:13.5px;color:#000;transform:scaleX(1.0200);-webkit-text-stroke:0.15px #000;">Agatha</div>
<div class="t" style="left:155.30px;top:246.07px;font-size:13.5px;line-height:13.5px;color:#000;transform:scaleX(1.0200);-webkit-text-stroke:0.15px #000;">Triste</div>
<div class="t" style="left:229.30px;top:246.07px;font-size:13.5px;line-height:13.5px;color:#000;transform:scaleX(1.0200);-webkit-text-stroke:0.15px #000;">female</div>
<div class="t" style="left:316.82px;top:246.07px;font-size:13.5px;line-height:13.5px;color:#000;transform:scaleX(0.9300);-webkit-text-stroke:0.15px #000;">32509</div>
<div class="t" style="left:387.80px;top:246.07px;font-size:13.5px;line-height:13.5px;color:#000;transform:scaleX(0.9300);-webkit-text-stroke:0.15px #000;">1000</div>
<div class="t" style="left:79.73px;top:266.07px;font-size:13.5px;line-height:13.5px;color:#000;transform:scaleX(0.9300);-webkit-text-stroke:0.15px #000;">1</div>
<div class="t" style="left:92.30px;top:266.07px;font-size:13.5px;line-height:13.5px;color:#000;transform:scaleX(1.0200);-webkit-text-stroke:0.15px #000;">Dulce</div>
<div class="t" style="left:155.30px;top:266.07px;font-size:13.5px;line-height:13.5px;color:#000;transform:scaleX(1.0200);-webkit-text-stroke:0.15px #000;">Abril</div>
<div class="t" style="left:229.30px;top:266.07px;font-size:13.5px;line-height:13.5px;color:#000;transform:scaleX(1.0200);-webkit-text-stroke:0.15px #000;">Female</div>
<div class="t" style="left:293.30px;top:266.07px;font-size:13.5px;line-height:13.5px;color:#000;transform:scaleX(1.0200);-webkit-text-stroke:0.15px #000;">15/10/201</div>
<div class="t" style="left:387.80px;top:266.07px;font-size:13.5px;line-height:13.5px;color:#000;transform:scaleX(0.9300);-webkit-text-stroke:0.15px #000;">1562</div>
<div class="t" style="left:79.73px;top:286.07px;font-size:13.5px;line-height:13.5px;color:#000;transform:scaleX(0.9300);-webkit-text-stroke:0.15px #000;">2</div>
<div class="t" style="left:92.30px;top:286.07px;font-size:13.5px;line-height:13.5px;color:#000;transform:scaleX(1.0200);-webkit-text-stroke:0.15px #000;">Mara</div>
<div class="t" style="left:155.30px;top:286.07px;font-size:13.5px;line-height:13.5px;color:#000;transform:scaleX(1.0200);-webkit-text-stroke:0.15px #000;">Hashimoto</div>
<div class="t" style="left:229.30px;top:286.07px;font-size:13.5px;line-height:13.5px;color:#000;transform:scaleX(1.0200);-webkit-text-stroke:0.15px #000;">Female</div>
<div class="t" style="left:293.30px;top:286.07px;font-size:13.5px;line-height:13.5px;color:#000;transform:scaleX(1.0200);-webkit-text-stroke:0.15px #000;">16/08/201</div>
<div class="t" style="left:387.80px;top:286.07px;font-size:13.5px;line-height:13.5px;color:#000;transform:scaleX(0.9300);-webkit-text-stroke:0.15px #000;">1582</div>
<div class="t" style="left:79.73px;top:306.07px;font-size:13.5px;line-height:13.5px;color:#000;transform:scaleX(0.9300);-webkit-text-stroke:0.15px #000;">3</div>
<div class="t" style="left:92.30px;top:306.07px;font-size:13.5px;line-height:13.5px;color:#000;transform:scaleX(1.0200);-webkit-text-stroke:0.15px #000;">Philip</div>
<div class="t" style="left:155.30px;top:306.07px;font-size:13.5px;line-height:13.5px;color:#000;transform:scaleX(1.0200);-webkit-text-stroke:0.15px #000;">Gent</div>
<div class="t" style="left:229.30px;top:306.07px;font-size:13.5px;line-height:13.5px;color:#000;transform:scaleX(1.0200);-webkit-text-stroke:0.15px #000;">Male</div>
<div class="t" style="left:293.30px;top:306.07px;font-size:13.5px;line-height:13.5px;color:#000;transform:scaleX(1.0200);-webkit-text-stroke:0.15px #000;">21/05/201</div>
<div class="t" style="left:387.80px;top:306.07px;font-size:13.5px;line-height:13.5px;color:#000;transform:scaleX(0.9300);-webkit-text-stroke:0.15px #000;">2587</div>
<div class="t" style="left:79.73px;top:326.07px;font-size:13.5px;line-height:13.5px;color:#000;transform:scaleX(0.9300);-webkit-text-stroke:0.15px #000;">4</div>
<div class="t" style="left:92.30px;top:326.07px;font-size:13.5px;line-height:13.5px;color:#000;transform:scaleX(1.0200);-webkit-text-stroke:0.15px #000;">Kathleen</div>
<div class="t" style="left:155.30px;top:326.07px;font-size:13.5px;line-height:13.5px;color:#000;transform:scaleX(1.0200);-webkit-text-stroke:0.15px #000;">Hanner</div>
<div class="t" style="left:229.30px;top:326.07px;font-size:13.5px;line-height:13.5px;color:#000;transform:scaleX(1.0200);-webkit-text-stroke:0.15px #000;">Female</div>
<div class="t" style="left:293.30px;top:326.07px;font-size:13.5px;line-height:13.5px;color:#000;transform:scaleX(1.0200);-webkit-text-stroke:0.15px #000;">15/10/201</div>
<div class="t" style="left:387.80px;top:326.07px;font-size:13.5px;line-height:13.5px;color:#000;transform:scaleX(0.9300);-webkit-text-stroke:0.15px #000;">3549</div>
<div class="t" style="left:79.73px;top:346.07px;font-size:13.5px;line-height:13.5px;color:#000;transform:scaleX(0.9300);-webkit-text-stroke:0.15px #000;">5</div>
<div class="t" style="left:92.30px;top:346.07px;font-size:13.5px;line-height:13.5px;color:#000;transform:scaleX(1.0200);-webkit-text-stroke:0.15px #000;">Nereida</div>
<div class="t" style="left:155.30px;top:346.07px;font-size:13.5px;line-height:13.5px;color:#000;transform:scaleX(1.0200);-webkit-text-stroke:0.15px #000;">Magwood</div>
<div class="t" style="left:229.30px;top:346.07px;font-size:13.5px;line-height:13.5px;color:#000;transform:scaleX(1.0200);-webkit-text-stroke:0.15px #000;">Female</div>
<div class="t" style="left:293.30px;top:346.07px;font-size:13.5px;line-height:13.5px;color:#000;transform:scaleX(1.0200);-webkit-text-stroke:0.15px #000;">16/08/201</div>
<div class="t" style="left:387.80px;top:346.07px;font-size:13.5px;line-height:13.5px;color:#000;transform:scaleX(0.9300);-webkit-text-stroke:0.15px #000;">2468</div>
<div class="t" style="left:79.73px;top:366.07px;font-size:13.5px;line-height:13.5px;color:#000;transform:scaleX(0.9300);-webkit-text-stroke:0.15px #000;">6</div>
<div class="t" style="left:92.30px;top:366.07px;font-size:13.5px;line-height:13.5px;color:#000;transform:scaleX(1.0200);-webkit-text-stroke:0.15px #000;">Gaston</div>
<div class="t" style="left:155.30px;top:366.07px;font-size:13.5px;line-height:13.5px;color:#000;transform:scaleX(1.0200);-webkit-text-stroke:0.15px #000;">Brumm</div>
<div class="t" style="left:229.30px;top:366.07px;font-size:13.5px;line-height:13.5px;color:#000;transform:scaleX(1.0200);-webkit-text-stroke:0.15px #000;">Male</div>
<div class="t" style="left:293.30px;top:366.07px;font-size:13.5px;line-height:13.5px;color:#000;transform:scaleX(1.0200);-webkit-text-stroke:0.15px #000;">21/05/201</div>
<div class="t" style="left:387.80px;top:366.07px;font-size:13.5px;line-height:13.5px;color:#000;transform:scaleX(0.9300);-webkit-text-stroke:0.15px #000;">2554</div>
<div class="t" style="left:79.73px;top:386.07px;font-size:13.5px;line-height:13.5px;color:#000;transform:scaleX(0.9300);-webkit-text-stroke:0.15px #000;">7</div>
<div class="t" style="left:92.30px;top:386.07px;font-size:13.5px;line-height:13.5px;color:#000;transform:scaleX(1.0200);-webkit-text-stroke:0.15px #000;">Etta</div>
<div class="t" style="left:155.30px;top:386.07px;font-size:13.5px;line-height:13.5px;color:#000;transform:scaleX(1.0200);-webkit-text-stroke:0.15px #000;">Hurn</div>
<div class="t" style="left:229.30px;top:386.07px;font-size:13.5px;line-height:13.5px;color:#000;transform:scaleX(1.0200);-webkit-text-stroke:0.15px #000;">Female</div>
<div class="t" style="left:293.30px;top:386.07px;font-size:13.5px;line-height:13.5px;color:#000;transform:scaleX(1.0200);-webkit-text-stroke:0.15px #000;">15/10/201</div>
<div class="t" style="left:387.80px;top:386.07px;font-size:13.5px;line-height:13.5px;color:#000;transform:scaleX(0.9300);-webkit-text-stroke:0.15px #000;">3598</div>
<div class="t" style="left:79.73px;top:406.07px;font-size:13.5px;line-height:13.5px;color:#000;transform:scaleX(0.9300);-webkit-text-stroke:0.15px #000;">8</div>
<div class="t" style="left:92.30px;top:406.07px;font-size:13.5px;line-height:13.5px;color:#000;transform:scaleX(1.0200);-webkit-text-stroke:0.15px #000;">Earlean</div>
<div class="t" style="left:155.30px;top:406.07px;font-size:13.5px;line-height:13.5px;color:#000;transform:scaleX(1.0200);-webkit-text-stroke:0.15px #000;">Melgar</div>
<div class="t" style="left:229.30px;top:406.07px;font-size:13.5px;line-height:13.5px;color:#000;transform:scaleX(1.0200);-webkit-text-stroke:0.15px #000;">Female</div>
<div class="t" style="left:293.30px;top:406.07px;font-size:13.5px;line-height:13.5px;color:#000;transform:scaleX(1.0200);-webkit-text-stroke:0.15px #000;">16/08/201</div>
<div class="t" style="left:387.80px;top:406.07px;font-size:13.5px;line-height:13.5px;color:#000;transform:scaleX(0.9300);-webkit-text-stroke:0.15px #000;">2456</div>
<div class="t" style="left:79.73px;top:426.07px;font-size:13.5px;line-height:13.5px;color:#000;transform:scaleX(0.9300);-webkit-text-stroke:0.15px #000;">9</div>
<div class="t" style="left:92.30px;top:426.07px;font-size:13.5px;line-height:13.5px;color:#000;transform:scaleX(1.0200);-webkit-text-stroke:0.15px #000;">Vincenza</div>
<div class="t" style="left:155.30px;top:426.07px;font-size:13.5px;line-height:13.5px;color:#000;transform:scaleX(1.0200);-webkit-text-stroke:0.15px #000;">Weiland</div>
<div class="t" style="left:229.30px;top:426.07px;font-size:13.5px;line-height:13.5px;color:#000;transform:scaleX(1.0200);-webkit-text-stroke:0.15px #000;">Female</div>
<div class="t" style="left:293.30px;top:426.07px;font-size:13.5px;line-height:13.5px;color:#000;transform:scaleX(1.0200);-webkit-text-stroke:0.15px #000;">21/05/201</div>
<div class="t" style="left:387.80px;top:426.07px;font-size:13.5px;line-height:13.5px;color:#000;transform:scaleX(0.9300);-webkit-text-stroke:0.15px #000;">6548</div>
</body></html>
